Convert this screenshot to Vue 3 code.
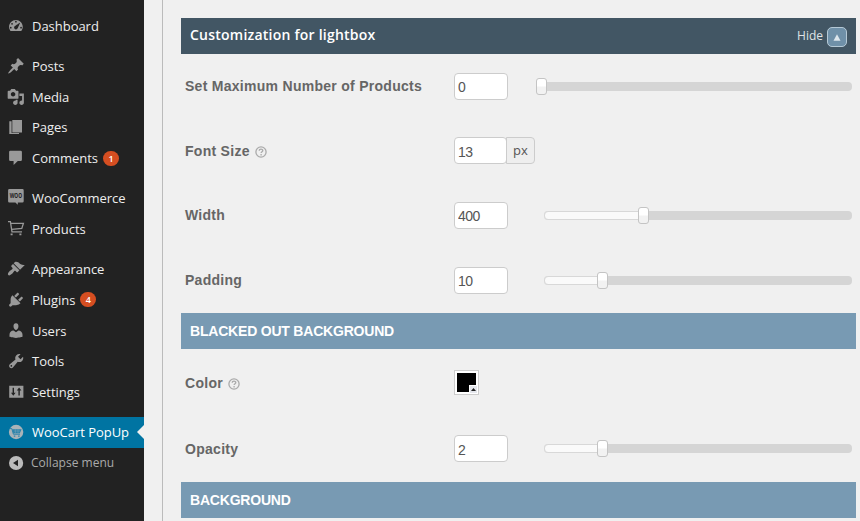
<script setup>
import { ref } from 'vue'

const dashiconBox = '0 0 20 20'
const pixelBox = '0 0 18 18'

const groups = [
  [
    {
      label: 'Dashboard',
      box: '-.4 .6 21 21',
      path: 'M3.76 17h12.48c1.1-1.37 1.76-3.11 1.76-5 0-4.42-3.58-8-8-8s-8 3.58-8 8c0 1.89.66 3.63 1.76 5zM9 6a1 1 0 1 1 2 0 1 1 0 0 1-2 0zM4.5 8.5a1 1 0 1 1 2 0 1 1 0 0 1-2 0zM8.52 11.4c.84-.83 6.51-4.5 6.51-4.5s-2.66 6.68-3.49 7.51c-.84.84-2.18.84-3.02 0-.83-.83-.83-2.18 0-3.01zM3 13a1 1 0 1 1 2 0 1 1 0 0 1-2 0zM15 13a1 1 0 1 1 2 0 1 1 0 0 1-2 0z',
    },
  ],
  [
    {
      label: 'Posts',
      box: dashiconBox,
      path: 'M10.44 3.02l1.82-1.82 6.36 6.35-1.83 1.82c-1.05-.68-2.48-.57-3.41.36l-.75.75c-.92.93-1.04 2.35-.35 3.41l-1.83 1.82-2.41-2.41-2.8 2.79c-.42.42-3.38 2.71-3.8 2.29s1.86-3.39 2.28-3.81l2.79-2.79L4.1 9.36l1.83-1.82c1.05.69 2.48.57 3.4-.36l.75-.75c.93-.92 1.05-2.35.36-3.41z',
    },
    {
      label: 'Media',
      box: '.5 0 19.5 20',
      path: 'M13 11V4c0-.55-.45-1-1-1h-1.67L9 1H5L3.67 3H2c-.55 0-1 .45-1 1v7c0 .55.45 1 1 1h10c.55 0 1-.45 1-1zM7 4.5c1.38 0 2.5 1.12 2.5 2.5S8.38 9.5 7 9.5 4.5 8.38 4.5 7 5.62 4.5 7 4.5zM14 6h5v10.5c0 1.38-1.12 2.5-2.5 2.5S14 17.88 14 16.5s1.12-2.5 2.5-2.5c.17 0 .34.02.5.05V9h-3V6zM10 14.05V13h2v3.5c0 1.38-1.12 2.5-2.5 2.5S7 17.88 7 16.5 8.12 14 9.5 14c.17 0 .34.02.5.05z',
    },
    {
      label: 'Pages',
      box: pixelBox,
      path: 'M5.3 2H15v12.4H5.3zM2.3 3.3h2.3v11.8h7.4v.9H2.3z',
    },
    {
      label: 'Comments',
      badge: 1,
      box: pixelBox,
      path: 'M3.4 1.8h10.2q1.3 0 1.3 1.3v7.6q0 1.3-1.3 1.3h-2.8l-4.2 4v-4H3.4q-1.3 0-1.3-1.3V3.1q0-1.3 1.3-1.3z',
    },
  ],
  [
    { label: 'WooCommerce', icon: 'woo', box: pixelBox },
    { label: 'Products', icon: 'cart', box: pixelBox },
  ],
  [
    {
      label: 'Appearance',
      box: '0 .3 20 20',
      path: 'M14.48 11.06L7.41 3.99l1.5-1.5c.5-.56 2.3-.47 3.51.32 1.21.8 1.43 1.28 2.91 2.1 1.18.64 2.45 1.26 4.45.85zm-.71.71L6.7 4.7 4.93 6.47c-.39.39-.39 1.02 0 1.41l1.06 1.06c.39.39.39 1.03 0 1.42-.6.6-1.43 1.11-2.21 1.69-.35.26-.7.53-1.01.84C1.43 14.23.4 16.08 1.4 17.07c.99 1 2.84-.03 4.18-1.36.31-.31.58-.66.85-1.02.57-.78 1.08-1.61 1.69-2.21.39-.39 1.02-.39 1.41 0l1.06 1.06c.39.39 1.02.39 1.41 0z',
    },
    {
      label: 'Plugins',
      badge: 4,
      box: '0 .3 20 20',
      path: 'M13.11 4.36L9.87 7.6 8 5.73l3.24-3.24c.35-.34 1.05-.2 1.56.32.52.51.66 1.21.31 1.55zm-8 1.77l.91-1.12 9.01 9.01-1.19.84c-.71.71-2.63 1.16-3.82 1.16H6.14L4.9 17.26c-.59.59-1.54.59-2.12 0-.59-.58-.59-1.53 0-2.12l1.24-1.24v-3.88c0-1.13.4-3.19 1.09-3.89zm7.26 3.97l3.24-3.24c.34-.35 1.04-.21 1.55.31.52.51.66 1.21.31 1.55l-3.24 3.25z',
    },
    {
      label: 'Users',
      box: '0 .5 20 20',
      path: 'M10 9.25c-2.27 0-2.73-3.44-2.73-3.44C7 4.02 7.82 2 9.97 2c2.16 0 2.98 2.02 2.71 3.81 0 0-.41 3.44-2.68 3.44zm0 2.57L12.72 10c2.39 0 4.52 2.33 4.52 4.53v2.49s-3.65 1.13-7.24 1.13c-3.65 0-7.24-1.13-7.24-1.13v-2.49c0-2.25 1.94-4.48 4.47-4.48z',
    },
    {
      label: 'Tools',
      box: '-.4 -.3 20.4 20.4',
      path: 'M16.68 9.77c-1.34 1.34-3.3 1.67-4.95.99l-5.41 6.52c-.99.99-2.59.99-3.58 0s-.99-2.59 0-3.57l6.52-5.42c-.68-1.65-.35-3.61.99-4.95 1.28-1.28 3.12-1.62 4.72-1.06l-2.89 2.89 2.82 2.82 2.86-2.87c.53 1.58.18 3.39-1.08 4.65zM3.81 16.21c.4.39 1.04.39 1.43 0 .4-.4.4-1.04 0-1.43-.39-.4-1.03-.4-1.43 0-.39.39-.39 1.03 0 1.43z',
    },
    {
      label: 'Settings',
      box: pixelBox,
      path: 'M2.2 2.8h14.2v12H2.2zM5.6 4.8v5H4l2.3 3 2.3-3H7v-5zM11.4 12.6h1.4V7.4h1.6l-2.3-3-2.3 3h1.6z',
    },
  ],
  [{ label: 'WooCart PopUp', icon: 'woocart', box: pixelBox, active: true }],
]

const lightboxRows = ref([
  { label: 'Set Maximum Number of Products', value: '0', slider: 0, wide: true },
  { label: 'Font Size', value: '13', help: true, unit: 'px' },
  { label: 'Width', value: '400', slider: 32.3 },
  { label: 'Padding', value: '10', slider: 19 },
])
const backdropRows = ref([
  { label: 'Color', help: true, swatch: true },
  { label: 'Opacity', value: '2', slider: 19 },
])
const sections = [
  { title: 'Customization for lightbox', rows: lightboxRows.value, main: true },
  { title: 'BLACKED OUT BACKGROUND', rows: backdropRows.value, tall: true },
  { title: 'BACKGROUND', rows: [] },
]
</script>

<template>
  <div class="page">
    <nav class="sidebar">
      <ul v-for="(group, g) in groups" :key="g" class="group">
        <li v-for="item in group" :key="item.label" class="item" :class="{ active: item.active }">
          <svg class="icon" :viewBox="item.box">
            <path v-if="item.path" :d="item.path" fill="currentColor" fill-rule="evenodd" />
            <template v-else-if="item.icon === 'woo'">
              <path d="M2.4 0h13q1.3 0 1.3 1.3v11q0 1.3-1.3 1.3h-4.6v2.2l-2.4-2.2h-6q-1.3 0-1.3-1.3v-11Q1.1 0 2.4 0z" fill="currentColor" />
              <text x="8.9" y="9.1" class="woo" text-anchor="middle" textLength="12.4" lengthAdjust="spacingAndGlyphs">WOO</text>
            </template>
            <g v-else-if="item.icon === 'cart'" fill="none" stroke="currentColor" stroke-width="1.3">
              <path d="M1 1.6h2.4l1.6 10.2h10M4 3.4h12.4l-1.6 5L4.7 9.4" />
              <path d="M3.6 14.3h2M12.4 14.3h2" stroke-width="1.8" />
            </g>
            <template v-else>
              <circle cx="9.1" cy="9" r="7.2" fill="#a9b3b8" />
              <path d="M3 5.6h1.8l1.6 5.6h6.6" fill="none" stroke="#2a83ab" stroke-width="1" />
              <path d="M5.2 6.2h9.4l-1.8 4H6.4z" fill="#2a83ab" />
              <path d="M6.8 8h6.2M8.4 6.2v4M11 6.2v4" stroke="#7ea7b8" stroke-width=".5" />
              <path d="M6.8 13.1h1.5M11.1 13.1h1.5" stroke="#2a83ab" stroke-width="1.3" />
            </template>
          </svg>
          <span>{{ item.label }}</span>
          <span v-if="item.badge" class="badge">{{ item.badge }}</span>
        </li>
      </ul>
      <div class="item collapse">
        <svg class="icon" viewBox="0 0 18 18">
          <circle cx="9.1" cy="9" r="7.1" fill="currentColor" />
          <path d="M11 5.8v6.4L6 9z" fill="#222" />
        </svg>
        <span>Collapse menu</span>
      </div>
    </nav>

    <main class="content">
      <section v-for="section in sections" :key="section.title">
        <header class="bar" :class="{ main: section.main }">
          <h2>{{ section.title }}</h2>
          <div v-if="section.main" class="toggle">
            <span>Hide</span>
            <button type="button" aria-label="Hide">
              <svg viewBox="0 0 8 7"><path d="M4 .3 7.5 6.7H.5z" fill="#dde6ec" /></svg>
            </button>
          </div>
        </header>
        <div v-if="section.rows.length" class="rows" :class="{ tall: section.tall }">
          <div v-for="row in section.rows" :key="row.label" class="row">
            <div class="label">
              <span>{{ row.label }}</span>
              <svg v-if="row.help" class="help" viewBox="0 0 12 12">
                <circle cx="6" cy="6" r="5.1" fill="none" stroke="#aaa" stroke-width="1.3" />
                <path d="M4.2 4.8c0-2.3 3.6-2.2 3.6-.2 0 1.2-1.7 1.2-1.7 2.5M6.1 8.1v1.3" fill="none" stroke="#aaa" stroke-width="1.3" />
              </svg>
            </div>
            <div class="field">
              <div v-if="row.swatch" class="swatch">
                <span class="corner"><svg viewBox="0 0 5 3"><path d="M2.5 0 5 3H0z" fill="#222" /></svg></span>
              </div>
              <input v-else v-model="row.value" type="text" :class="{ joined: row.unit }" />
              <span v-if="row.unit" class="unit">{{ row.unit }}</span>
            </div>
            <div v-if="row.slider !== undefined" class="slider" :class="{ wide: row.wide }">
              <div class="fill" :style="{ width: row.slider + '%' }"></div>
              <div class="handle" :style="{ left: row.slider + '%' }"></div>
            </div>
          </div>
        </div>
      </section>
    </main>
  </div>
</template>

<style>
body {
  margin: 0;
  background: #f0f0f0;
}
</style>

<style scoped>
.page {
  display: flex;
  width: 860px;
  height: 521px;
  overflow: hidden;
  background: #f0f0f0;
  font-family: 'Open Sans', sans-serif;
}
.sidebar {
  box-sizing: border-box;
  width: 144px;
  padding-top: 10.4px;
  background: #222;
  color: #eee;
  font-size: 13px;
}
.group {
  margin: 0 0 9.4px;
  padding: 0;
  list-style: none;
}
.group:nth-child(5) {
  margin-bottom: 0;
}
.item {
  display: flex;
  align-items: center;
  position: relative;
  box-sizing: border-box;
  height: 30.75px;
  padding-left: 7px;
  line-height: 18px;
  letter-spacing: -0.03px;
  white-space: nowrap;
}
.icon {
  flex: none;
  width: 18px;
  height: 18px;
  margin-right: 7px;
  color: #999;
}
.woo {
  font: bold 6.5px 'Open Sans', sans-serif;
  letter-spacing: 0;
  fill: #222;
}
.active {
  background: #0074a2;
  color: #fff;
}
.active::after {
  content: '';
  position: absolute;
  right: 0;
  top: 8px;
  border: 7px solid transparent;
  border-left: 0;
  border-right-color: #f0f0f0;
}
.badge {
  width: 16px;
  height: 15px;
  margin-left: 5px;
  border-radius: 8px;
  background: #d54e21;
  color: #fff;
  font-size: 9px;
  font-weight: 600;
  line-height: 15px;
  text-align: center;
}
.collapse {
  color: #aaa;
}
.collapse .icon {
  margin-right: 6px;
  color: #bbb;
}
.collapse span {
  margin-top: -1px;
  font-size: 12px;
  letter-spacing: 0.02px;
}
.content {
  box-sizing: border-box;
  width: 698px;
  margin-left: 18px;
  padding: 18px 4px 0 18px;
  border-left: 1px solid #bbb;
}
.bar {
  display: flex;
  align-items: center;
  justify-content: space-between;
  box-sizing: border-box;
  height: 36px;
  padding: 0 9px;
  background: #789ab3;
  color: #fff;
}
.bar h2 {
  margin: 0;
  font: bold 14px/20px 'Liberation Sans', sans-serif;
  letter-spacing: -0.2px;
}
.bar.main {
  background: #425664;
}
.bar.main h2 {
  font: 600 14px/20px 'Open Sans', sans-serif;
  margin-top: -2px;
  letter-spacing: 0.23px;
}
.toggle {
  display: flex;
  align-items: center;
  gap: 4px;
  color: #dfe3e6;
  font-size: 12px;
}
.toggle span {
  margin-top: -1px;
}
.toggle button {
  display: flex;
  align-items: center;
  justify-content: center;
  box-sizing: border-box;
  width: 20px;
  height: 20px;
  margin-top: 2px;
  padding: 0;
  border: 1px solid #b5c9d6;
  border-radius: 5px;
  background: #6f90a8;
}
.toggle svg {
  width: 8px;
  height: 7px;
}
.rows {
  padding-bottom: 0.6px;
}
.row {
  display: flex;
  align-items: center;
  height: 64.6px;
  padding-left: 4px;
}
.tall {
  padding: 1px 0 0;
}
.tall .row {
  height: 66px;
}
.label {
  display: flex;
  align-items: center;
  gap: 5px;
  width: 269px;
  color: #666;
  font: bold 14px/20px 'Liberation Sans', sans-serif;
  letter-spacing: 0.28px;
  white-space: nowrap;
}
.help {
  width: 12px;
  height: 12px;
  margin-top: 2px;
}
.field {
  display: flex;
  width: 90px;
}
input {
  box-sizing: border-box;
  width: 54px;
  height: 27px;
  padding: 2px 3px 0;
  border: 1px solid #ccc;
  border-radius: 4px;
  outline: none;
  background: #fff;
  color: #555;
  font: 14px 'Liberation Sans', sans-serif;
  letter-spacing: -0.5px;
}
input.joined {
  width: 53px;
}
.unit {
  box-sizing: border-box;
  width: 29px;
  height: 27px;
  margin-left: -1px;
  border: 1px solid #ccc;
  border-radius: 0 4px 4px 0;
  background: #eee;
  color: #555;
  font-size: 13px;
  line-height: 24px;
  text-align: center;
}
.swatch {
  position: relative;
  box-sizing: border-box;
  width: 25px;
  height: 25px;
  border: 1px solid #ccc;
  background: #000;
  box-shadow: inset 0 0 0 2px #fff;
}
.tall .swatch {
  margin-top: -1px;
}
.corner {
  position: absolute;
  right: 1px;
  bottom: 1px;
  display: flex;
  align-items: center;
  justify-content: center;
  width: 7px;
  height: 7px;
  border-top: 1px solid #fff;
  border-left: 1px solid #fff;
  background: #e4e6ec;
}
.corner svg {
  width: 5px;
  height: 3px;
}
.slider {
  position: relative;
  width: 308px;
  height: 9px;
  border-radius: 4px;
  background: #d5d5d5;
}
.slider.wide {
  width: 311px;
  margin-left: -3px;
}
.fill {
  box-sizing: border-box;
  height: 9px;
  border: 1px solid #d8d8d8;
  border-radius: 4px 0 0 4px;
  background: #fafafa;
}
.wide .fill {
  display: none;
}
.handle {
  position: absolute;
  top: -4px;
  box-sizing: border-box;
  width: 11px;
  height: 17px;
  margin-left: -5.5px;
  border: 1px solid #c4c4c4;
  border-radius: 3px;
  background: linear-gradient(#fff 45%, #f2f2f2 55%);
}
</style>
